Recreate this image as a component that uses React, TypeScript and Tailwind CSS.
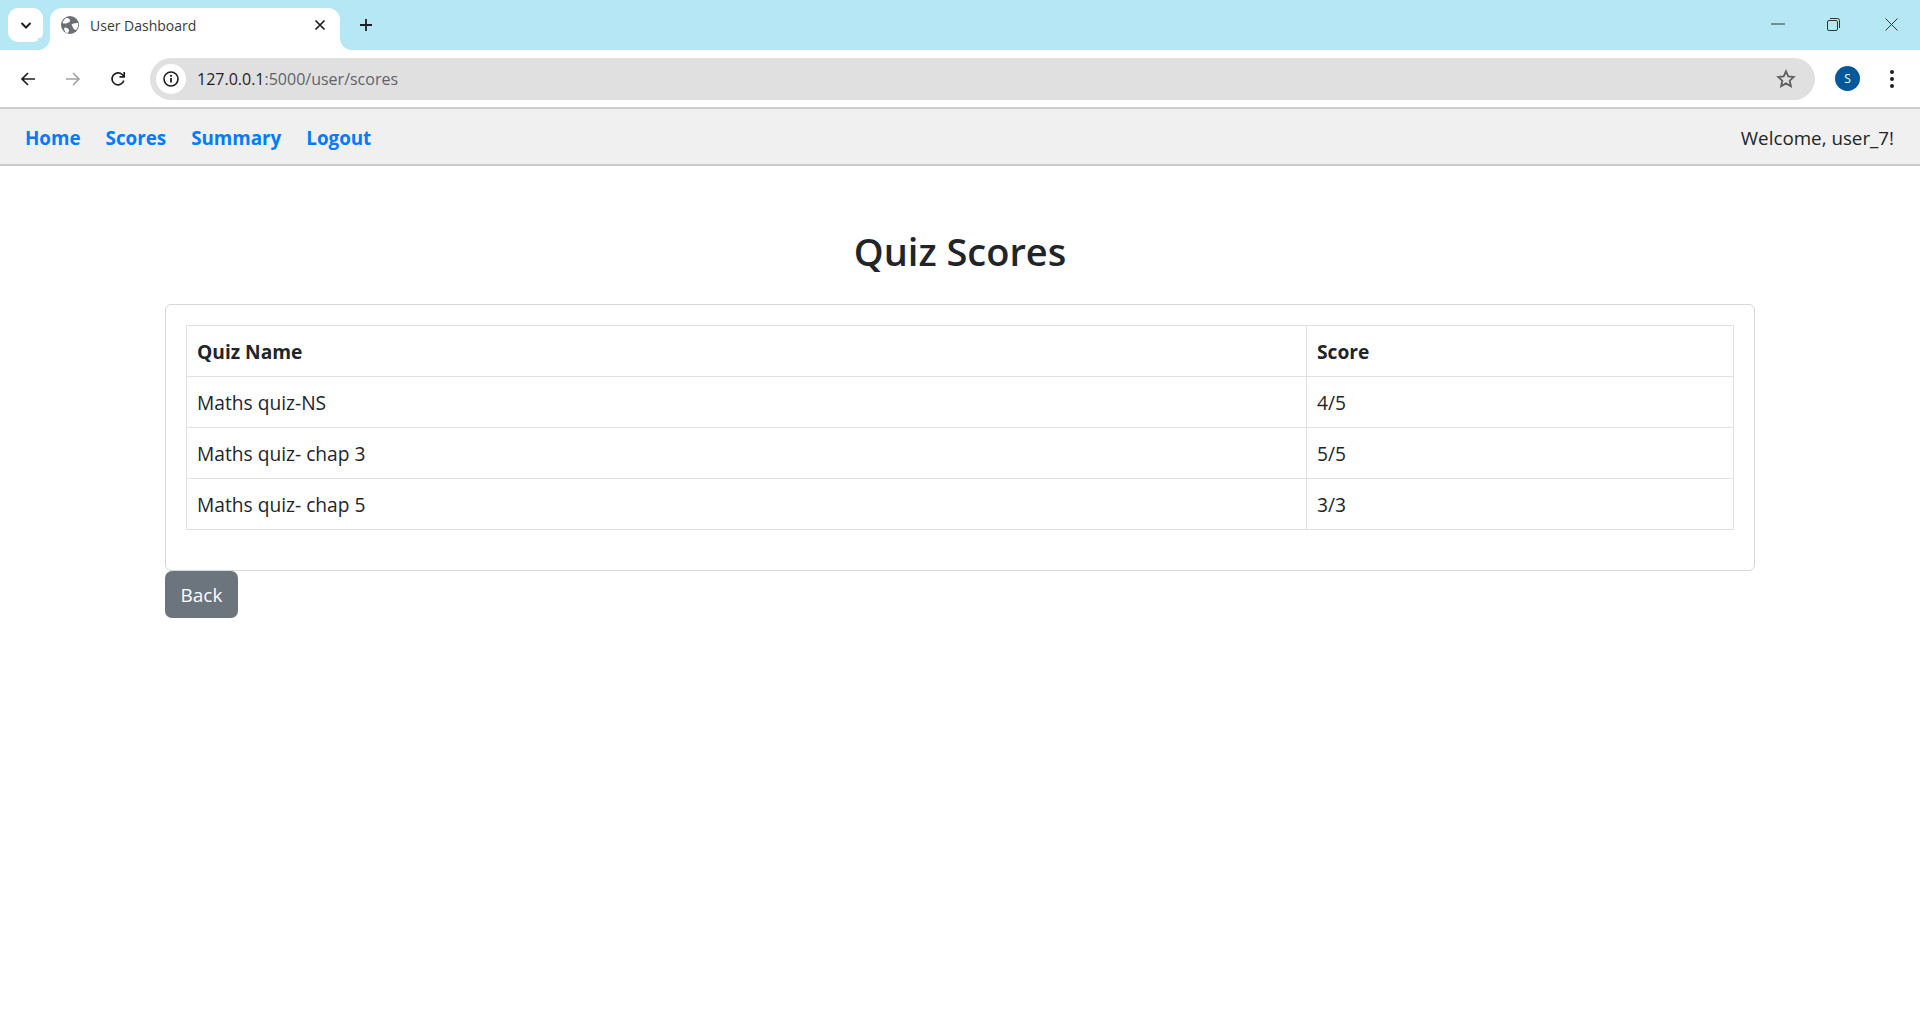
const rows = [
  { name: "Maths quiz-NS", score: "4/5" },
  { name: "Maths quiz- chap 3", score: "5/5" },
  { name: "Maths quiz- chap 5", score: "3/3" },
];

const navLinks = ["Home", "Scores", "Summary", "Logout"];

const BrowserChrome = () => {
  return (
    <div className="font-['Open_Sans',sans-serif]">
      <div className="h-[50px] bg-[#b5e8f4] flex items-end relative">
        <div className="absolute left-[8px] top-[8px] w-[35px] h-[34px] bg-white rounded-[10px] flex items-center justify-center">
          <svg width="14" height="14" viewBox="0 0 14 14" fill="none" stroke="#1f1f1f" strokeWidth="2">
            <path d="M2.5 5l4.5 4.5 4.5-4.5" />
          </svg>
        </div>
        <div className="ml-[50px] w-[290px] h-[42px] pb-[8px] bg-white rounded-t-[12px] flex items-center relative">
          <span className="absolute left-[-12px] bottom-0 w-[12px] h-[12px] bg-white" />
          <span className="absolute left-[-12px] bottom-0 w-[12px] h-[12px] bg-[#b5e8f4] rounded-br-[12px]" />
          <span className="absolute right-[-12px] bottom-0 w-[12px] h-[12px] bg-white" />
          <span className="absolute right-[-12px] bottom-0 w-[12px] h-[12px] bg-[#b5e8f4] rounded-bl-[12px]" />
          <svg className="ml-[11px]" width="18" height="18" viewBox="0 0 18 18">
            <circle cx="9" cy="9" r="9" fill="#6b6f75" />
            <path d="M3 12.5c1-1.5 2-1 3-.5s2 1 2 2.500c0 1-1 2.500-2 2.500-1.500-.5-3-3-3-4.500zM5 2c2 0 3.500.5 4 2s-1 2.500-2.500 3S3 8 1.500 7C2 5 3.500 3 5 2zM11 8c2-.5 4-1 6-1 .5 2 0 5-2 7-1.500 0-2.500-1-3-2.500S10 9 11 8z" fill="#ffffff" />
          </svg>
          <span className="ml-[11px] text-[14px] text-[#3a3a3a]">User Dashboard</span>
          <svg className="absolute left-[264px] top-[11px]" width="12" height="12" viewBox="0 0 12 12" fill="none" stroke="#1f1f1f" strokeWidth="1.700">
            <path d="M1.500 1.500l9 9M10.500 1.500l-9 9" />
          </svg>
        </div>
        <svg className="absolute left-[359px] top-[18px]" width="14" height="14" viewBox="0 0 14 14" fill="none" stroke="#1f1f1f" strokeWidth="1.800">
          <path d="M7 1v12M1 7h12" />
        </svg>
        <svg className="absolute left-[1771px] top-[23px]" width="14" height="2" viewBox="0 0 14 2">
          <path d="M0 1h14" stroke="#333" strokeWidth="1" />
        </svg>
        <svg className="absolute left-[1827px] top-[18px]" width="13" height="13" viewBox="0 0 13 13" fill="none" stroke="#333" strokeWidth="1">
          <rect x="0.500" y="2.500" width="10" height="10" rx="1.500" />
          <path d="M3 .5h7.500a2 2 0 0 1 2 2V10" />
        </svg>
        <svg className="absolute left-[1885px] top-[18px]" width="13" height="13" viewBox="0 0 13 13" fill="none" stroke="#333" strokeWidth="1">
          <path d="M.5.5l12 12M12.500.5l-12 12" />
        </svg>
      </div>
      <div className="h-[57px] bg-white rounded-t-[10px] flex items-center relative">
        <svg className="ml-[20px]" width="16" height="16" viewBox="0 0 16 16" fill="none" stroke="#1f1f1f" strokeWidth="1.700">
          <path d="M15 8H2M8 2L2 8l6 6" />
        </svg>
        <svg className="ml-[29px]" width="16" height="16" viewBox="0 0 16 16" fill="none" stroke="#a3a3a3" strokeWidth="1.700">
          <path d="M1 8h13M8 2l6 6-6 6" />
        </svg>
        <svg className="ml-[29px]" width="16" height="16" viewBox="0 0 16 16" fill="none" stroke="#1f1f1f" strokeWidth="1.700">
          <path d="M13.800 9.500A6 6 0 1 1 12.200 3.500L14 5.200" />
          <path d="M14.200 1v4.800H9.500" />
        </svg>
        <div className="ml-[24px] w-[1665px] h-[42px] rounded-[21px] bg-[#e0e0e0] flex items-center relative">
          <div className="ml-[6px] w-[30px] h-[30px] rounded-full bg-white flex items-center justify-center">
            <svg width="16" height="16" viewBox="0 0 16 16" fill="none">
              <circle cx="8" cy="8" r="7" stroke="#1f1f1f" strokeWidth="1.600" />
              <path d="M8 7v4.500" stroke="#1f1f1f" strokeWidth="1.800" />
              <circle cx="8" cy="4.800" r="1.100" fill="#1f1f1f" />
            </svg>
          </div>
          <span className="ml-[11px] pt-[1px] text-[16px] text-[#5f6368]">
            <span className="text-[#1f1f1f]">127.0.0.1</span>:5000/user/scores
          </span>
          <svg className="absolute right-[19px] top-[11px]" width="20" height="20" viewBox="0 0 20 20" fill="none" stroke="#5f5f5f" strokeWidth="1.800">
            <path d="M10 2.300l2.300 5.100 5.500.6-4.100 3.700 1.200 5.500-4.900-2.800-4.900 2.800 1.200-5.500L2.200 8l5.500-.6z" />
          </svg>
        </div>
        <div className="ml-[20px] w-[25px] h-[25px] rounded-full bg-[#02589b] text-white text-[12px] flex items-center justify-center">
          S
        </div>
        <svg className="ml-[29px]" width="6" height="20" viewBox="0 0 6 20" fill="#1f1f1f">
          <circle cx="3" cy="3" r="2" />
          <circle cx="3" cy="10" r="2" />
          <circle cx="3" cy="17" r="2" />
        </svg>
      </div>
    </div>
  );
};

const App = () => {
  return (
    <div className="min-h-[1015px] bg-white font-['Open_Sans',sans-serif] text-[#212529]">
      <BrowserChrome />
      <nav className="h-[59px] bg-[#f0f0f0] border-y-2 border-[#cccccc] flex items-center justify-between pl-[25px] pr-[26px] pt-[3px] text-[18.800px]">
        <div className="flex gap-[25px]">
          {navLinks.map((link) => (
            <a key={link} href="#" className="font-bold text-[#007bff]">
              {link}
            </a>
          ))}
        </div>
        <span>Welcome, user_7!</span>
      </nav>
      <main className="mx-[165px] pt-[55px]">
        <h1 className="text-center text-[38px] font-semibold leading-[60px] mb-[23px]">Quiz Scores</h1>
        <div className="border border-[#d6d8da] rounded-[6px] p-[20px] pb-[40px]">
          <table className="w-full border-collapse text-[19.200px] table-fixed">
            <thead>
              <tr className="h-[51px]">
                <th className="w-[1120px] border border-[#dee2e6] px-[10px] pt-[3px] text-left font-bold">Quiz Name</th>
                <th className="border border-[#dee2e6] px-[10px] pt-[3px] text-left font-bold">Score</th>
              </tr>
            </thead>
            <tbody>
              {rows.map((row) => (
                <tr key={row.name} className="h-[51px]">
                  <td className="border border-[#dee2e6] px-[10px] pt-[3px]">{row.name}</td>
                  <td className="border border-[#dee2e6] px-[10px] pt-[3px]">{row.score}</td>
                </tr>
              ))}
            </tbody>
          </table>
        </div>
        <button className="w-[73px] h-[47px] pt-[2px] rounded-[7px] bg-[#6c757d] text-white text-[19px]">Back</button>
      </main>
    </div>
  );
};

export default App;
